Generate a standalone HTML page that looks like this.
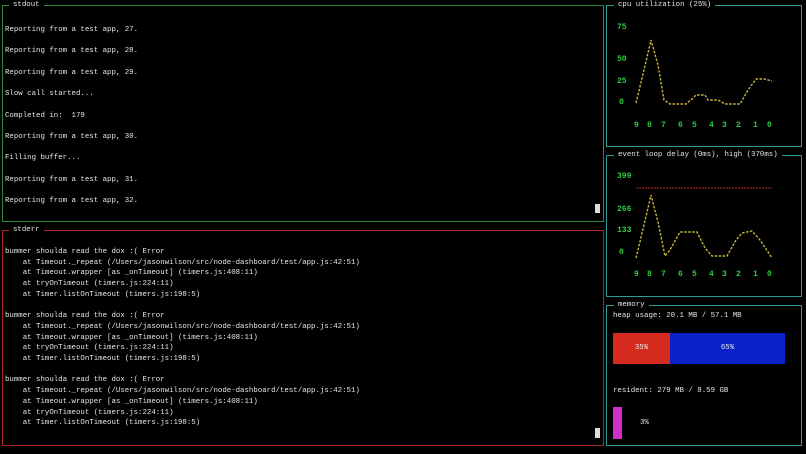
<!DOCTYPE html>
<html><head><meta charset="utf-8"><style>
body{margin:0;width:806px;height:454px;background:#000;overflow:hidden;font-family:"Liberation Mono",monospace;font-size:7.4px;color:#e6e6e6;position:relative}
.b{position:absolute;border:1px solid}
.t{position:absolute;background:#000;padding:0 4px;white-space:pre;line-height:9px}
.p{position:absolute;white-space:pre;line-height:10.7px;margin:0}
.g{color:#2ecc40;position:absolute;font-size:8px;font-weight:bold}
</style></head><body>
<div class="b" style="left:2px;top:5px;width:600px;height:215px;border-color:#2e8b3e"></div>
<div class="t" style="left:9px;top:1px">stdout</div>
<div class="p" style="left:5px;top:20px;line-height:21.4px">Reporting from a test app, 27.
Reporting from a test app, 28.
Reporting from a test app, 29.
Slow call started...
Completed in:  179
Reporting from a test app, 30.
Filling buffer...
Reporting from a test app, 31.
Reporting from a test app, 32.</div>
<div style="position:absolute;left:595px;top:204px;width:5px;height:9px;background:#ddd"></div>
<div class="b" style="left:2px;top:230px;width:600px;height:214px;border-color:#a8282a"></div>
<div class="t" style="left:9px;top:226px">stderr</div>
<div class="p" style="left:5px;top:247px">bummer shoulda read the dox :( Error
    at Timeout._repeat (/Users/jasonwilson/src/node-dashboard/test/app.js:42:51)
    at Timeout.wrapper [as _onTimeout] (timers.js:408:11)
    at tryOnTimeout (timers.js:224:11)
    at Timer.listOnTimeout (timers.js:198:5)

bummer shoulda read the dox :( Error
    at Timeout._repeat (/Users/jasonwilson/src/node-dashboard/test/app.js:42:51)
    at Timeout.wrapper [as _onTimeout] (timers.js:408:11)
    at tryOnTimeout (timers.js:224:11)
    at Timer.listOnTimeout (timers.js:198:5)

bummer shoulda read the dox :( Error
    at Timeout._repeat (/Users/jasonwilson/src/node-dashboard/test/app.js:42:51)
    at Timeout.wrapper [as _onTimeout] (timers.js:408:11)
    at tryOnTimeout (timers.js:224:11)
    at Timer.listOnTimeout (timers.js:198:5)</div>
<div style="position:absolute;left:595px;top:428px;width:5px;height:10px;background:#ddd"></div>

<div class="b" style="left:606px;top:5px;width:194px;height:140px;border-color:#2a9d9a"></div>
<div class="t" style="left:614px;top:1px">cpu utilization (25%)</div>
<div class="b" style="left:606px;top:155px;width:194px;height:140px;border-color:#2a9d9a"></div>
<div class="t" style="left:614px;top:151px">event loop delay (0ms), high (370ms)</div>
<div class="b" style="left:606px;top:305px;width:194px;height:139px;border-color:#2a9d9a"></div>
<div class="t" style="left:614px;top:301px">memory</div>

<div class="g" style="left:617px;top:23px">75</div>
<div class="g" style="left:617px;top:55px">50</div>
<div class="g" style="left:617px;top:77px">25</div>
<div class="g" style="left:619px;top:98px">0</div>
<div class="g" style="left:617px;top:172px">399</div>
<div class="g" style="left:617px;top:205px">266</div>
<div class="g" style="left:617px;top:226px">133</div>
<div class="g" style="left:619px;top:248px">0</div>
<svg style="position:absolute;left:0;top:0" width="806" height="454">
<g fill="#2ecc40" font-family="Liberation Mono, monospace" font-size="8" font-weight="bold">
<text x="634" y="127">9</text><text x="647" y="127">8</text><text x="661" y="127">7</text><text x="678" y="127">6</text><text x="692" y="127">5</text><text x="709" y="127">4</text><text x="722" y="127">3</text><text x="736" y="127">2</text><text x="753" y="127">1</text><text x="767" y="127">0</text>
<text x="634" y="276">9</text><text x="647" y="276">8</text><text x="661" y="276">7</text><text x="678" y="276">6</text><text x="692" y="276">5</text><text x="709" y="276">4</text><text x="722" y="276">3</text><text x="736" y="276">2</text><text x="753" y="276">1</text><text x="767" y="276">0</text>
</g>
<g fill="none" stroke="#c9b43a" stroke-width="1.4" stroke-dasharray="2.5 1.5">
<polyline points="636,103 644,70 651,40 658,65 664,100 670,104 686,104 692,99 696,95 705,95 708,100 718,100 725,104 740,104 748,90 756,79 764,79 772,81"/>
<polyline points="636,258 644,225 651,195 658,222 665,256 670,250 680,232 697,232 705,248 712,256 727,256 736,240 742,233 752,231 760,240 772,258"/>
</g>
<line x1="636" y1="188" x2="772" y2="188" stroke="#c0282a" stroke-width="1" stroke-dasharray="2 1"/>
</svg>
<div class="p" style="left:613px;top:311px">heap usage: 20.1 MB / 57.1 MB</div>
<div style="position:absolute;left:613px;top:333px;width:57px;height:31px;background:#d42a20;color:#eee;text-align:center;line-height:31px">35%</div>
<div style="position:absolute;left:670px;top:333px;width:115px;height:31px;background:#0a22c8;color:#eee;text-align:center;line-height:31px">65%</div>
<div class="p" style="left:613px;top:386px">resident: 279 MB / 8.59 GB</div>
<div style="position:absolute;left:613px;top:407px;width:9px;height:32px;background:#d030c8"></div>
<div class="p" style="left:640px;top:418px">3%</div>
</body></html>
